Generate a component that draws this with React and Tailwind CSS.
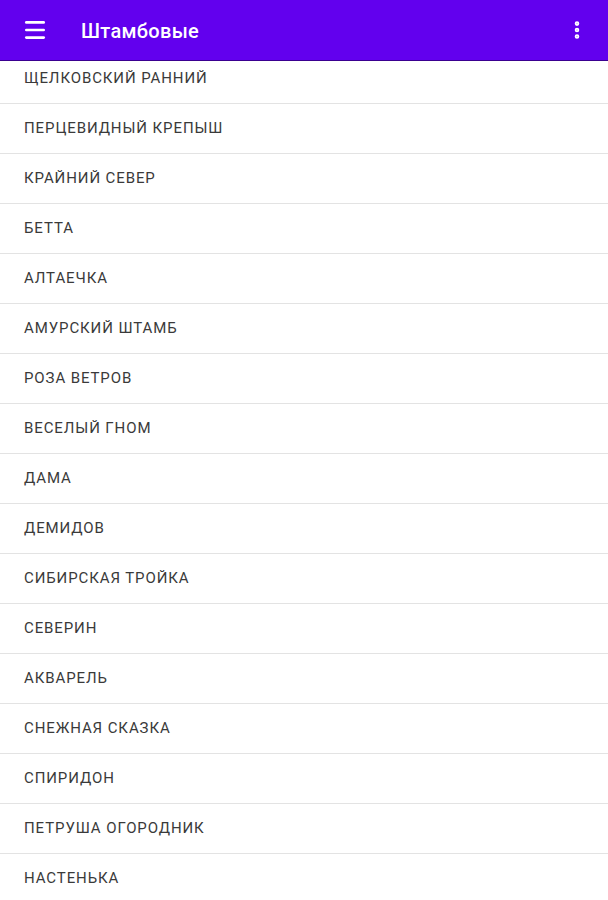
import { Menu, EllipsisVertical } from 'lucide-react'

const items = [
  'ЩЕЛКОВСКИЙ РАННИЙ',
  'ПЕРЦЕВИДНЫЙ КРЕПЫШ',
  'КРАЙНИЙ СЕВЕР',
  'БЕТТА',
  'АЛТАЕЧКА',
  'АМУРСКИЙ ШТАМБ',
  'РОЗА ВЕТРОВ',
  'ВЕСЕЛЫЙ ГНОМ',
  'ДАМА',
  'ДЕМИДОВ',
  'СИБИРСКАЯ ТРОЙКА',
  'СЕВЕРИН',
  'АКВАРЕЛЬ',
  'СНЕЖНАЯ СКАЗКА',
  'СПИРИДОН',
  'ПЕТРУША ОГОРОДНИК',
  'НАСТЕНЬКА',
]

function App() {
  return (
    <div className="w-[608px] h-[900px] overflow-hidden bg-white flex flex-col font-['Roboto',sans-serif]">
      <div className="h-[61px] shrink-0 bg-[#6200ee] flex items-center pl-[22px] pr-[20px] border-b border-[#3a0090] z-10">
        <Menu size={26} strokeWidth={2.5} className="text-white" />
        <span className="ml-[33px] mt-[2px] text-white text-[20px] font-medium tracking-[0.3px]">Штамбовые</span>
        <EllipsisVertical size={22} strokeWidth={3} className="text-white ml-auto" />
      </div>
      <div className="flex-1 overflow-hidden">
        <div className="-mt-[7px]">
          {items.map((name) => (
            <div
              key={name}
              className="h-[50px] flex items-center pl-[24px] border-b border-[#e3e3e3] text-[15px] text-[#3a3a3a] tracking-[0.9px]"
            >
              {name}
            </div>
          ))}
        </div>
      </div>
    </div>
  )
}

export default App
